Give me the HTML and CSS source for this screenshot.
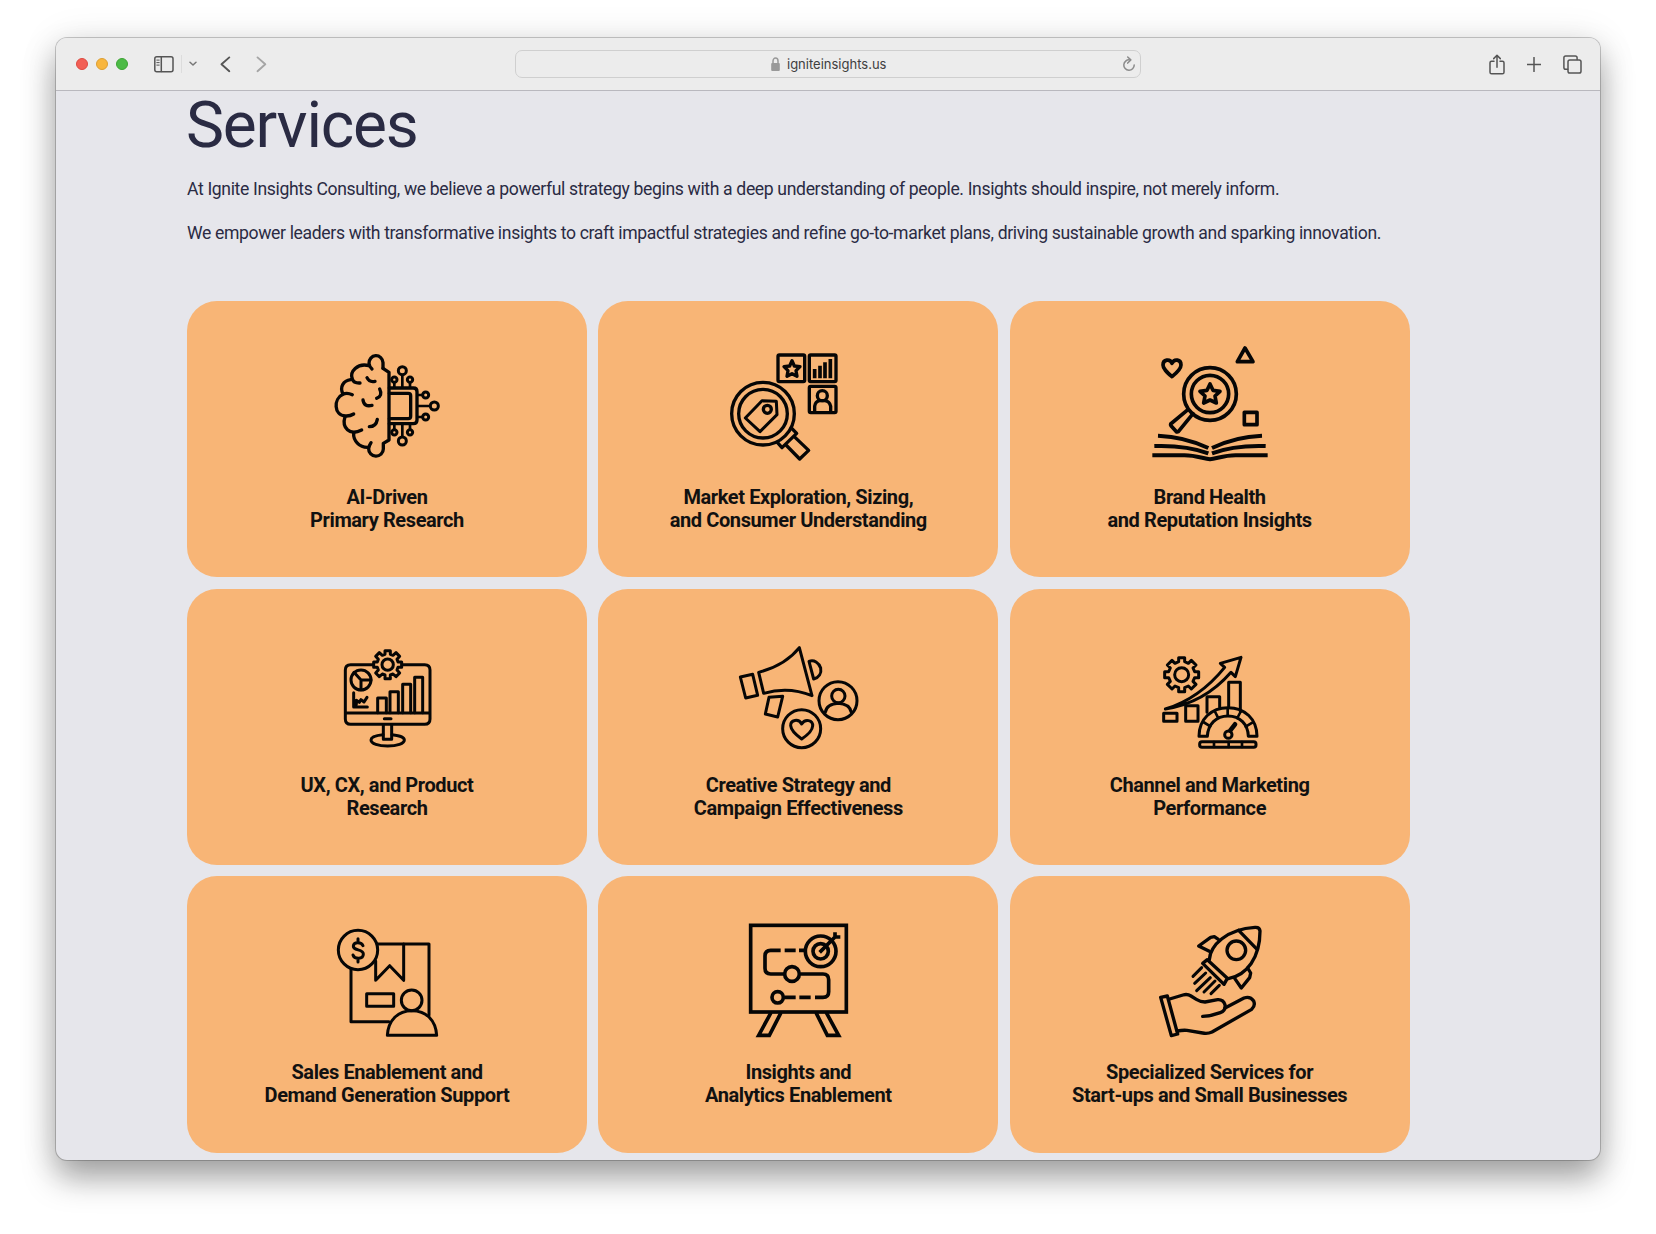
FILE: index.html
```html
<!DOCTYPE html>
<html lang="en">
<head>
  <meta charset="UTF-8">
  <title>Ignite Insights - Services</title>
  <link rel="stylesheet" href="styles.css">
</head>
<body>

  <div class="window">
    <div class="toolbar">
      <div class="lights">
        <span class="light red"></span>
        <span class="light yellow"></span>
        <span class="light green"></span>
      </div>
      <div class="nav">
        <svg class="sidebar-icon" width="20" height="17" viewBox="0 0 20 17">
          <rect x="0.8" y="0.8" width="18.2" height="14.9" rx="2"/>
          <path d="M7.3 1v14.5"/>
          <path class="thin" d="M2.8 4.1h2.4M2.8 6.6h2.4M2.8 9.1h2.4"/>
        </svg>
        <span class="divider"></span>
        <svg class="chevron-down" width="8" height="6" viewBox="0 0 8 6"><path d="M1 1.2l3 2.8 3-2.8"/></svg>
        <svg class="back" width="11" height="17" viewBox="0 0 11 17"><path d="M9.3 1.4L1.5 8.3l7.8 6.9"/></svg>
        <svg class="forward" width="11" height="17" viewBox="0 0 11 17"><path d="M1.5 1.4l7.8 6.9-7.8 6.9"/></svg>
      </div>
      <div class="address">
        <svg class="lock" width="9" height="14" viewBox="0 0 9 14">
          <path d="M2 7V4a2.5 3 0 0 1 5 0v3"/>
          <rect x="0.2" y="6" width="8.6" height="8" rx="1"/>
        </svg>
        <span class="url">igniteinsights.us</span>
        <svg class="reload" width="14" height="17" viewBox="0 0 14 17">
          <path d="M7.6 3.9A5.2 5.2 0 1 0 12.2 9"/>
          <path d="M5.7 1l3.1 2.9-3.1 3.2"/>
        </svg>
      </div>
      <div class="actions">
        <svg width="16" height="21" viewBox="0 0 16 21">
          <path d="M5 7.2H2.6a1.6 1.6 0 0 0-1.6 1.6v9.4a1.6 1.6 0 0 0 1.6 1.6h10.8a1.6 1.6 0 0 0 1.6-1.6V8.8a1.6 1.6 0 0 0-1.6-1.6H11"/>
          <path d="M8 13.3V1.4M4.7 4.6L8 1.3l3.3 3.3"/>
        </svg>
        <svg width="14" height="15" viewBox="0 0 14 15"><path d="M7 .5v14M.2 7.500h13.600"/></svg>
        <svg width="19" height="19" viewBox="0 0 19 19">
          <path d="M4.700 14.300H2.700A1.800 1.800 0 0 1 .900 12.500V2.700A1.800 1.800 0 0 1 2.700.900h9.600a1.800 1.800 0 0 1 1.800 1.800v1.700"/>
          <rect x="5" y="4.900" width="13" height="13.200" rx="1.800"/>
        </svg>
      </div>
    </div>

    <div class="page">
      <h1>Services</h1>
      <p class="intro first">At Ignite Insights Consulting, we believe a powerful strategy begins with a deep understanding of people. Insights should inspire, not merely inform.</p>
      <p class="intro second">We empower leaders with transformative insights to craft impactful strategies and refine go-to-market plans, driving sustainable growth and sparking innovation.</p>

      <div class="grid">
        <div class="card">
          <svg class="icon w10" viewBox="-24 -15 450 420">
            <path d="M189 85V68A21 22 0 0 0 147 70Q148 80 156 87"/>
            <path d="M189 85L207 97V300L190 310V327A22 22 0 0 1 146 326Q147 316 153 308"/>
            <path d="M147 77C112 68 88 95 97 117Q101 130 120 129"/>
            <path d="M92 119C70 122 58 141 69 162Q82 157 97 164"/>
            <path d="M69 163C40 176 41 226 76 228Q90 229 101 222"/>
            <path d="M75 230C65 262 88 289 125 270"/>
            <path d="M101 279C99 301 118 323 144 322"/>
            <path d="M141 113Q148 128 165 124M179 147Q189 167 170 175M129 180Q132 202 156 196M172 238Q168 260 148 260"/>
            <path d="M208 144H280Q291 144 291 155V240Q291 251 280 251H208M208 160H265Q272 160 272 167V229Q272 236 265 236H208"/>
            <path class="w8" d="M223 130V142M247 105V142M270 130V142M223 252V266M247 252V290M270 252V266M292 165H306M292 198H330M292 231H306"/>
            <g class="w9">
              <circle cx="223" cy="119" r="8"/><circle cx="247" cy="92" r="12"/><circle cx="270" cy="119" r="8"/>
              <circle cx="223" cy="277" r="8"/><circle cx="247" cy="303" r="12"/><circle cx="270" cy="277" r="8"/>
              <circle cx="317" cy="165" r="9"/><circle cx="343" cy="198" r="12"/><circle cx="317" cy="231" r="9"/>
            </g>
          </svg>
          <h2>AI-Driven<br>Primary Research</h2>
        </div>

        <div class="card">
          <svg class="icon w10" viewBox="24 -15 450 420">
            <rect x="189" y="45" width="80" height="80" rx="4"/>
            <rect x="283" y="45" width="80" height="80" rx="4"/>
            <rect x="283" y="139" width="80" height="79" rx="4"/>
            <path d="M231 62L238 78L255 80L243 92L246 109L231 101L216 109L219 92L207 80L224 78Z"/>
            <path class="w11 butt" d="M299 87V115M315 77V115M330 67V115M346 57V115"/>
            <circle cx="322" cy="167" r="15"/>
            <path d="M299 216V199Q301 184 314 182H330Q344 184 347 199V216"/>
            <circle cx="144" cy="221" r="94"/>
            <circle cx="144" cy="221" r="73"/>
            <path class="w9" d="M91 234L141 182L184 184L186 224L135 275Z"/>
            <circle cx="157" cy="208" r="12"/>
            <path d="M229 264L245 280L201 323L187 307M237 289L281 331L254 357L213 315"/>
          </svg>
          <h2>Market Exploration, Sizing,<br>and Consumer Understanding</h2>
        </div>

        <div class="card">
          <svg class="icon w11" viewBox="-15 0 450 420">
            <path d="M96 125C80 111 69 101 69 90C69 73 90 70 96 85C103 70 123 73 123 90C123 101 112 112 96 125Z"/>
            <path d="M315 39L339 80H292Z"/>
            <rect x="313" y="232" width="38" height="37"/>
            <circle cx="210" cy="177" r="79"/>
            <circle cx="210" cy="177" r="56"/>
            <path d="M210 147L219 166L240 169L225 183L229 204L210 195L191 204L195 183L180 169L201 166Z"/>
            <path d="M141 226L92 267Q91 269 93 272L108 289Q111 292 115 290L159 236"/>
            <path class="w12 butt" d="M54 302C105 304 157 316 205 339M366 302C315 304 263 316 216 339M43 333C103 331 157 337 205 355M377 333C317 331 263 337 216 355M37 361H130C165 360 190 371 210 373C230 371 255 360 290 361H383"/>
          </svg>
          <h2>Brand Health<br>and Reputation Insights</h2>
        </div>

        <div class="card">
          <svg class="icon w9" viewBox="-54 -51 450 420">
            <path d="M130 74H62Q46 74 46 90V237Q46 253 62 253H284Q300 253 300 237V90Q300 74 284 74H216M46 219H300M163 236H183"/>
            <path d="M143 218V174H169V218M180 218V155H205V218M218 218V133H242V218M254 218V112H278V218"/>
            <circle cx="173" cy="74" r="17"/>
            <path transform="translate(173 74)" d="M-8 -31V-42H8V-31L16 -28L25 -36L36 -25L28 -16L31 -8H42V8H31L28 16L36 25L25 36L16 28L8 31V42H-8V31L-16 28L-25 36L-36 25L-28 16L-31 8H-42V-8H-31L-28 -16L-36 -25L-25 -36L-16 -28Z"/>
            <circle cx="93" cy="120" r="30"/>
            <path d="M72 97L93 120H123M93 120V149M71 158V201H112M79 193V181L88 187L93 179L102 186L111 172"/>
            <path d="M160 255V298H185V255"/>
            <path d="M159 284C137 286 123 292 123 300C123 311 145 318 173 318C201 318 223 311 223 300C223 292 208 286 186 284"/>
          </svg>
          <h2>UX, CX, and Product<br>Research</h2>
        </div>

        <div class="card">
          <svg class="icon w9" viewBox="-6 -36 450 420">
            <path d="M223 38L261 182C215 163 163 161 116 175L101 112C151 99 196 72 223 38Z"/>
            <path d="M46 126L83 118L98 181L62 189Z"/>
            <path d="M132 187L173 184L158 246L121 237Z"/>
            <path d="M252 79C267 73 282 83 287 99C290 115 282 128 266 132Z"/>
            <circle cx="339" cy="197" r="57"/>
            <circle cx="340" cy="183" r="20"/>
            <path d="M301 232Q305 207 340 205Q374 207 379 232"/>
            <circle cx="230" cy="281" r="57"/>
            <path d="M230 312C212 299 198 287 197 272C196 254 221 250 230 267C240 250 264 255 263 273C262 287 248 300 230 312Z"/>
          </svg>
          <h2>Creative Strategy and<br>Campaign Effectiveness</h2>
        </div>

        <div class="card">
          <svg class="icon w9" viewBox="-45 -66 450 420">
            <circle cx="95" cy="89" r="21"/>
            <path transform="translate(95 89)" d="M-9 -39V-51H9V-39L20 -34L29 -43L43 -29L34 -20L39 -9H51V9H39L34 20L43 29L29 43L20 34L9 39V51H-9V39L-20 34L-29 43L-43 29L-34 20L-39 9H-51V-9H-39L-34 -20L-43 -29L-29 -43L-20 -34Z"/>
            <path d="M46 192C125 168 182 119 224 67L211 55L273 37L256 95L243 82C190 143 126 180 46 192Z"/>
            <rect x="41" y="205" width="40" height="24"/>
            <rect x="107" y="182" width="37" height="47"/>
            <path d="M171 202V155H209V187M236 184V112H271V200"/>
            <path d="M147 274C147 222 184 188 234 188C284 188 321 222 321 274H295C294 238 270 213 234 213C198 213 174 238 172 274Z"/>
            <path class="w8" d="M160 231L181 244M194 198L204 218M233 190V212M273 198L262 219M307 233L287 245"/>
            <circle cx="235" cy="269" r="11"/>
            <path class="w14" d="M241 256L255 238"/>
            <rect x="149" y="290" width="169" height="17" rx="7"/>
            <path class="w8" d="M192 291V306M236 291V306M276 291V306"/>
          </svg>
          <h2>Channel and Marketing<br>Performance</h2>
        </div>

        <div class="card">
          <svg class="icon w9" viewBox="-39 -30 450 420">
            <circle cx="99" cy="90" r="59"/>
            <path d="M158 72H312V286M78 148V305H192"/>
            <path d="M152 123V181L194 137L236 181V72"/>
            <path d="M114 77C110 66 86 64 85 78C84 93 115 86 115 102C115 119 88 118 84 105M99 56V66M99 116V126"/>
            <rect x="125" y="221" width="81" height="38"/>
            <circle cx="260" cy="241" r="31"/>
            <path d="M187 346C190 300 219 272 261 272C303 272 332 300 335 346Z"/>
          </svg>
          <h2>Sales Enablement and<br>Demand Generation Support</h2>
        </div>

        <div class="card">
          <svg class="icon w11 miter" viewBox="-36 -15 450 420">
            <rect x="47" y="31" width="287" height="260"/>
            <path d="M108 293L71 361H103L138 293M243 293L277 361H311L274 293"/>
            <path d="M137 106H107Q90 106 90 123V160Q90 177 107 177H148M196 177H264Q281 177 281 194V230Q281 247 264 247H240M149 106H182M192 106H210M148 247H182M193 247H227"/>
            <circle cx="171" cy="177" r="22"/>
            <circle cx="128" cy="247" r="17"/>
            <circle cx="257" cy="109" r="46"/>
            <circle cx="257" cy="109" r="23"/>
            <path d="M254 112L300 66M300 52V66H316"/>
          </svg>
          <h2>Insights and<br>Analytics Enablement</h2>
        </div>

        <div class="card">
          <svg class="icon w10" viewBox="-45 -15 450 420">
            <path d="M32 247L52 243L83 357L64 362Z"/>
            <path d="M59 252L99 240Q112 236 123 243L139 253Q150 260 165 261L203 254Q220 253 225 269Q228 287 211 293Q185 303 158 304"/>
            <path d="M225 279L282 249Q301 243 311 258Q317 272 305 283L186 351Q173 357 158 354L111 346Q97 345 82 348"/>
            <path d="M178 134C181 91 230 42 315 37Q329 36 330 48C330 128 291 180 235 191"/>
            <path d="M266 46L319 101"/>
            <circle cx="259" cy="106" r="28"/>
            <path d="M158 145L172 134L232 190L222 208Z"/>
            <path d="M205 73L193 65L182 67L146 93L178 109M293 159L302 174L299 188L274 219L254 190"/>
            <path class="w9" d="M155 158L129 184M167 174L134 205M181 188L140 227M195 198L162 231M208 211L183 236"/>
          </svg>
          <h2>Specialized Services for<br>Start-ups and Small Businesses</h2>
        </div>
      </div>
    </div>
  </div>

</body>
</html>
```
FILE: styles.css
```css
body {
  margin: 0;
  height: 1234px;
  background: #fff;
  font-family: Roboto, "Liberation Sans", sans-serif;
  overflow: hidden;
}
.window {
  width: 1544px;
  height: 1122px;
  margin: 38px 56px 0;
  border-radius: 11px;
  background: #e6e6eb;
  overflow: hidden;
  box-shadow: 0 0 0 1px rgba(0, 0, 0, 0.2), 0 18px 32px rgba(0, 0, 0, 0.34), 0 2px 38px rgba(0, 0, 0, 0.1);
}

/* browser toolbar */
.toolbar {
  display: flex;
  align-items: center;
  height: 53px;
  box-sizing: border-box;
  background: #ececec;
  border-bottom: 1px solid #b9b8be;
  padding: 0 18px 0 20px;
}
.toolbar svg {
  fill: none;
  stroke: #555;
  stroke-width: 1.5;
  stroke-linecap: round;
  stroke-linejoin: round;
  flex: none;
}
.lights {
  display: flex;
  gap: 8px;
}
.light {
  width: 12px;
  height: 12px;
  border-radius: 50%;
  box-sizing: border-box;
  border: 1px solid;
}
.red {
  background: #f25f55;
  border-color: #de4a41;
}
.yellow {
  background: #f8b63e;
  border-color: #dd9f33;
}
.green {
  background: #4cbb46;
  border-color: #3da434;
}
.nav {
  display: flex;
  align-items: center;
  width: 361px;
  margin-left: 26px;
}
.toolbar .thin {
  stroke-width: 1;
}
.divider {
  width: 1px;
  height: 18px;
  margin: 0 7px;
  background: #dcdcdc;
}
.toolbar .chevron-down {
  stroke: #777;
}
.back {
  margin-left: 23px;
}
.toolbar .back,
.toolbar .forward {
  stroke-width: 1.9;
}
.toolbar .forward {
  margin-left: 25px;
  stroke: #a5a5a5;
}
.address {
  display: flex;
  align-items: center;
  width: 626px;
  height: 28px;
  box-sizing: border-box;
  border: 1px solid #cfcfcf;
  border-radius: 7px;
  padding: 0 4px 0 255px;
}
.toolbar .lock {
  stroke: #999;
}
.lock rect {
  fill: #999;
  stroke: none;
}
.url {
  margin-left: 7px;
  font-family: Inter, "Liberation Sans", sans-serif;
  font-size: 13px;
  color: #404040;
}
.toolbar .reload {
  margin-left: auto;
  stroke: #8b8b8b;
}
.actions {
  display: flex;
  align-items: center;
  gap: 22px;
  margin-left: auto;
}

/* page content */
.page {
  padding: 0 190px 0 131px;
  color: #2a2b43;
}
h1 {
  margin: 0 0 0 -1px;
  padding-top: 2px;
  font-size: 64px;
  line-height: 66px;
  font-weight: 400;
  letter-spacing: -1.2px;
}
.intro {
  margin: 0;
  font-size: 17.6px;
  line-height: 24px;
  letter-spacing: -0.355px;
  white-space: nowrap;
}
.first {
  margin-top: 18px;
}
.second {
  margin-top: 20px;
}
.grid {
  display: grid;
  grid-template-columns: repeat(3, 400px);
  grid-auto-rows: 276.4px;
  gap: 11.3px;
  margin-top: 56px;
}
.card {
  display: flex;
  flex-direction: column;
  align-items: center;
  padding-top: 34px;
  box-sizing: border-box;
  border-radius: 30px;
  background: #f8b576;
}
.card h2 {
  margin: 11px 0 0;
  font-size: 20px;
  line-height: 23px;
  font-weight: 700;
  letter-spacing: -0.4px;
  text-align: center;
  white-space: nowrap;
  color: #111;
}

/* line icons */
.icon {
  width: 150px;
  height: 140px;
  flex: none;
  fill: none;
  stroke: #060606;
  stroke-linecap: round;
  stroke-linejoin: round;
}
.w8 { stroke-width: 8; }
.w9 { stroke-width: 9; }
.w10 { stroke-width: 10; }
.w11 { stroke-width: 11; }
.w12 { stroke-width: 12; }
.w14 { stroke-width: 14; }
.butt {
  stroke-linecap: butt;
}
.miter {
  stroke-linecap: butt;
  stroke-linejoin: miter;
}
```
